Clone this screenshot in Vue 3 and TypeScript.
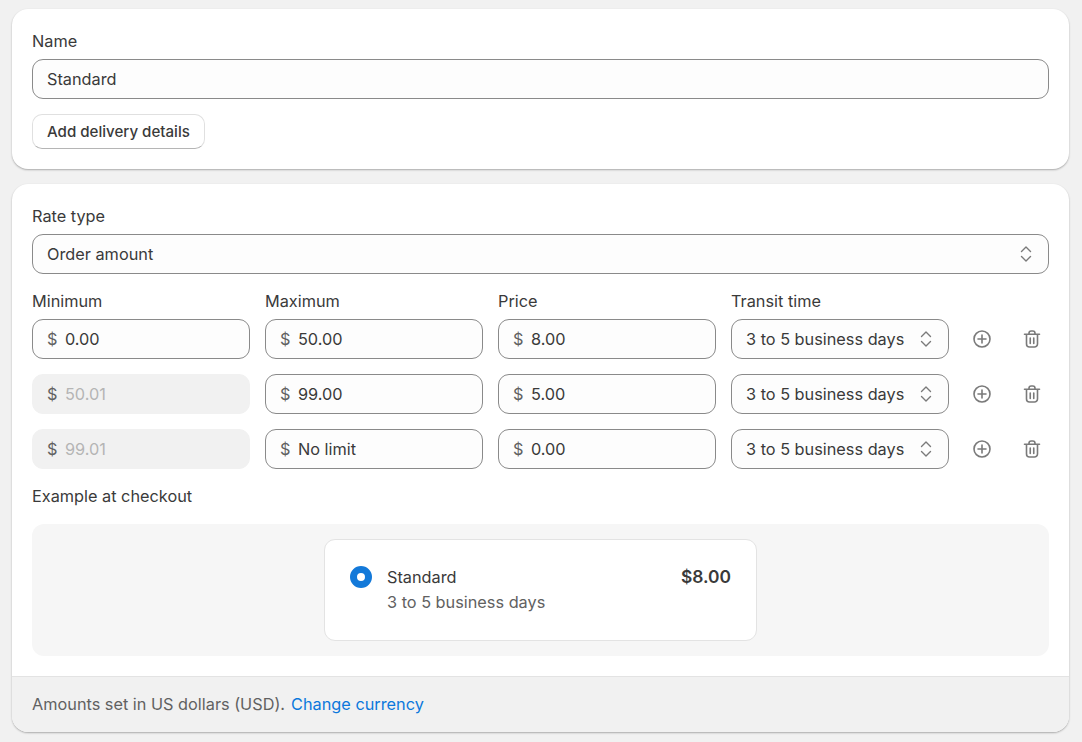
<script setup lang="ts">
interface Rate {
  min: string;
  max: string;
  price: string;
  locked: boolean;
}

const rates: Rate[] = [
  { min: '0.00', max: '50.00', price: '8.00', locked: false },
  { min: '50.01', max: '99.00', price: '5.00', locked: true },
  { min: '99.01', max: 'No limit', price: '0.00', locked: true },
];
</script>

<template>
  <div class="page">
    <section class="card first">
      <div class="label">Name</div>
      <div class="field">Standard</div>
      <button class="btn">Add delivery details</button>
    </section>

    <section class="card second">
      <div class="body">
        <div class="label">Rate type</div>
        <div class="field select">
          <span>Order amount</span>
          <svg class="chev" viewBox="0 0 20 20"><path d="M5.5 7.5 10 3l4.500 4.500M5.500 12.500 10 17l4.500-4.500" /></svg>
        </div>

        <div class="grid heads">
          <div class="label">Minimum</div>
          <div class="label">Maximum</div>
          <div class="label">Price</div>
          <div class="label">Transit time</div>
        </div>

        <div class="rows">
          <div v-for="r in rates" :key="r.min" class="grid">
            <div class="field money" :class="{ locked: r.locked }">
              <span class="cur">$</span><span class="val">{{ r.min }}</span>
            </div>
            <div class="field money">
              <span class="cur">$</span><span>{{ r.max }}</span>
            </div>
            <div class="field money">
              <span class="cur">$</span><span>{{ r.price }}</span>
            </div>
            <div class="field select">
              <span>3 to 5 business days</span>
              <svg class="chev" viewBox="0 0 20 20"><path d="M5.5 7.5 10 3l4.500 4.500M5.500 12.500 10 17l4.500-4.500" /></svg>
            </div>
            <div class="actions">
              <svg class="icon" viewBox="0 0 20 20">
                <circle cx="10" cy="10" r="8" />
                <path d="M10 6v8M6 10h8" />
              </svg>
              <svg class="icon" viewBox="0 0 20 20">
                <path d="M2.500 5.250h15M7 5.250V4.250a2.250 2.250 0 0 1 2.250-2.250h1.500a2.250 2.250 0 0 1 2.250 2.250v1M4.500 5.250v9.750a3 3 0 0 0 3 3h5a3 3 0 0 0 3-3V5.250M8.250 9v5.500M11.750 9v5.500" />
              </svg>
            </div>
          </div>
        </div>

        <div class="label example">Example at checkout</div>
        <div class="preview">
          <div class="option">
            <span class="radio"></span>
            <div class="info">
              <div>Standard</div>
              <div class="sub">3 to 5 business days</div>
            </div>
            <strong class="amount">$8.00</strong>
          </div>
        </div>
      </div>

      <footer class="foot">
        <span>Amounts set in US dollars (USD).</span> <a class="link">Change currency</a>
      </footer>
    </section>
  </div>
</template>

<style>
html,
body {
  margin: 0;
  background: #f1f1f1;
}
</style>

<style scoped>
.page {
  display: flex;
  flex-direction: column;
  gap: 15px;
  box-sizing: border-box;
  width: 1082px;
  height: 742px;
  overflow: hidden;
  padding: 9px 13px 0 12px;
  font-family: Inter, "Liberation Sans", sans-serif;
  font-size: 16.3px;
  line-height: 24px;
  color: #3a3a3a;
}

.card {
  background: #fff;
  border-radius: 16px;
  box-shadow: 0 1px 2px rgba(0, 0, 0, 0.3);
  overflow: hidden;
}

.first {
  height: 160px;
  box-sizing: border-box;
  padding: 20px;
}

.body {
  padding: 20px 20px 20px;
}

.label {
  height: 24px;
  margin-bottom: 6px;
}

.field {
  box-sizing: border-box;
  display: flex;
  align-items: center;
  height: 40px;
  padding: 0 14px;
  background: #fdfdfd;
  border: 1px solid #8a8a8a;
  border-radius: 11px;
}

.btn {
  display: block;
  box-sizing: border-box;
  height: 35px;
  margin-top: 15px;
  padding: 0 14px;
  background: #fff;
  border: 1px solid #e0e0e0;
  border-bottom-color: #b5b5b5;
  border-radius: 10px;
  font: 550 15.1px/24px Inter, "Liberation Sans", sans-serif;
  color: #3a3a3a;
}

.select {
  justify-content: space-between;
  padding-right: 12px;
}

.chev {
  width: 20px;
  height: 20px;
  fill: none;
  stroke: #7a7a7a;
  stroke-width: 1.4;
  stroke-linecap: round;
  stroke-linejoin: round;
}

.grid {
  display: grid;
  grid-template-columns: repeat(4, 218px) 1fr;
  column-gap: 15px;
}

.heads {
  margin-top: 15px;
}

.rows {
  display: flex;
  flex-direction: column;
  gap: 15px;
}

.money {
  gap: 7.5px;
}

.cur {
  color: #616161;
}

.locked {
  background: #f1f1f1;
  border-color: #f1f1f1;
}

.locked .val {
  color: #b5b5b5;
}

.actions {
  display: flex;
  align-items: center;
  gap: 30px;
  padding-left: 8px;
}

.icon {
  width: 20px;
  height: 20px;
  fill: none;
  stroke: #7a7a7a;
  stroke-width: 1.6;
  stroke-linecap: round;
  stroke-linejoin: round;
}

.example {
  margin-top: 15px;
  margin-bottom: 16px;
}

.preview {
  display: flex;
  justify-content: center;
  padding: 15px 0;
  background: #f6f6f6;
  border-radius: 12px;
}

.option {
  display: flex;
  box-sizing: border-box;
  width: 433px;
  height: 102px;
  padding: 25px 25px 0;
  background: #fff;
  border: 1px solid #e3e3e3;
  border-radius: 11px;
}

.radio {
  box-sizing: border-box;
  width: 22px;
  height: 22px;
  margin: 1px 15px 0 0;
  background: #fff;
  border: 7.5px solid #1379d9;
  border-radius: 50%;
}

.info {
  flex: 1;
}

.sub {
  margin-top: 1px;
  color: #616161;
}

.amount {
  font-size: 17.4px;
  font-weight: 600;
}

.foot {
  display: flex;
  align-items: center;
  gap: 6px;
  box-sizing: border-box;
  height: 56px;
  padding: 0 20px 2px;
  background: #f1f1f1;
  border-top: 1px solid #e3e3e3;
  color: #616161;
}

.link {
  color: #0b78dc;
}
</style>
